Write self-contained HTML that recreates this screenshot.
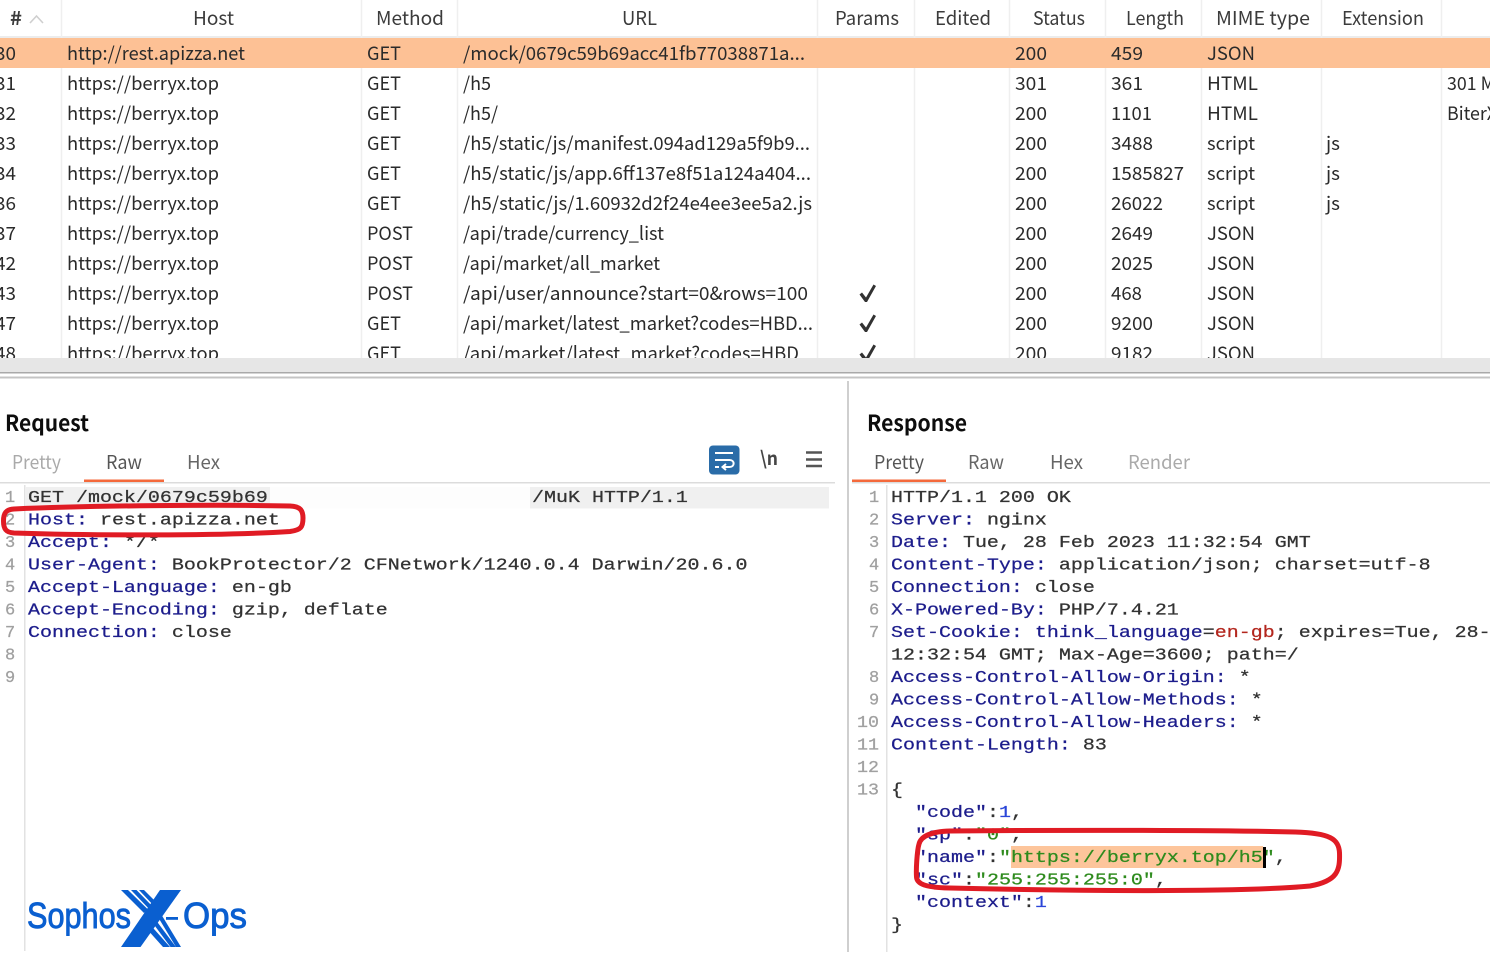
<!DOCTYPE html>
<html><head><meta charset="utf-8"><title>Burp capture</title>
<style>
html,body{margin:0;padding:0;background:#fff;width:1490px;height:968px;overflow:hidden}
svg{display:block}
.s{font-family:"Noto Sans CJK SC","Liberation Sans",sans-serif;font-size:18.5px;fill:#2b2b2b}
.h{font-family:"Noto Sans CJK SC","Liberation Sans",sans-serif;font-size:19px;fill:#3a3a3a}
.t{font-family:"Noto Sans CJK SC","Liberation Sans",sans-serif;font-size:19px;fill:#555}
.b{font-family:"Noto Sans CJK SC","Liberation Sans",sans-serif;font-size:22px;font-weight:700;fill:#111}
.m{font-family:"Liberation Mono",monospace;font-size:17px;fill:#333;stroke:#333;stroke-width:.25px;white-space:pre}
.n{fill:#1f1f8c;stroke:#1f1f8c}.r{fill:#b3261e;stroke:#b3261e}.g{fill:#2e8b1f;stroke:#2e8b1f}.u{fill:#2a45d8;stroke:#2a45d8}.l{fill:#a0a0a0;stroke:#a0a0a0}
.lg{font-family:"Liberation Sans",sans-serif;font-size:36px;fill:#0a5fd0;stroke:#0a5fd0;stroke-width:.9px}
</style></head><body>
<svg width="1490" height="968" viewBox="0 0 1490 968" xmlns="http://www.w3.org/2000/svg" xml:space="preserve">
<defs>
<clipPath id="tbl"><rect x="0" y="0" width="1490" height="358"/></clipPath>
<filter id="soft" x="-2%" y="-2%" width="104%" height="104%"><feGaussianBlur stdDeviation="0.35"/></filter>
<g id="chk"><path d="M859.5 294.5 L862 292.5 L866 297.5 L873.5 284.5 L876 286 L867 302 L865 302 Z" fill="#333"/></g>
</defs>
<rect width="1490" height="968" fill="#fff"/>

<g clip-path="url(#tbl)">
<rect x="0" y="36" width="1490" height="2" fill="#ececec"/>
<g stroke="#efefef" stroke-width="1.5">
<path d="M61.5 0V358M361.5 0V358M457.5 0V358M817.5 0V358M914.5 0V358M1009.5 0V358M1105.5 0V358M1201.5 0V358M1321.5 0V358M1441.5 0V358" fill="none"/>
</g>
<rect x="0" y="38" width="1490" height="30" fill="#fdc195"/>
<g filter="url(#soft)">
<text class="h" x="10" y="25" textLength="12" lengthAdjust="spacingAndGlyphs" font-weight="700">#</text>
<path d="M30 23 L36.500 16 L43 23" fill="none" stroke="#cfcfcf" stroke-width="1.6"/>
<text class="h" x="193" y="25" textLength="41" lengthAdjust="spacingAndGlyphs">Host</text>
<text class="h" x="376" y="25" textLength="68" lengthAdjust="spacingAndGlyphs">Method</text>
<text class="h" x="622" y="25" textLength="35" lengthAdjust="spacingAndGlyphs">URL</text>
<text class="h" x="835" y="25" textLength="64" lengthAdjust="spacingAndGlyphs">Params</text>
<text class="h" x="935" y="25" textLength="56" lengthAdjust="spacingAndGlyphs">Edited</text>
<text class="h" x="1033" y="25" textLength="52" lengthAdjust="spacingAndGlyphs">Status</text>
<text class="h" x="1126" y="25" textLength="58" lengthAdjust="spacingAndGlyphs">Length</text>
<text class="h" x="1216" y="25" textLength="94" lengthAdjust="spacingAndGlyphs">MIME type</text>
<text class="h" x="1342" y="25" textLength="82" lengthAdjust="spacingAndGlyphs">Extension</text>

<text class="s" x="-5" y="60" textLength="21" lengthAdjust="spacingAndGlyphs">30</text>
<text class="s" x="67" y="60" textLength="178" lengthAdjust="spacingAndGlyphs">http://rest.apizza.net</text>
<text class="s" x="367" y="60" textLength="34" lengthAdjust="spacingAndGlyphs">GET</text>
<text class="s" x="463" y="60" textLength="342" lengthAdjust="spacingAndGlyphs">/mock/0679c59b69acc41fb77038871a...</text>
<text class="s" x="1015" y="60" textLength="32" lengthAdjust="spacingAndGlyphs">200</text>
<text class="s" x="1111" y="60" textLength="32" lengthAdjust="spacingAndGlyphs">459</text>
<text class="s" x="1207" y="60" textLength="48" lengthAdjust="spacingAndGlyphs">JSON</text>

<text class="s" x="-5" y="90" textLength="21" lengthAdjust="spacingAndGlyphs">31</text>
<text class="s" x="67" y="90" textLength="152" lengthAdjust="spacingAndGlyphs">https://berryx.top</text>
<text class="s" x="367" y="90" textLength="34" lengthAdjust="spacingAndGlyphs">GET</text>
<text class="s" x="463" y="90" textLength="28" lengthAdjust="spacingAndGlyphs">/h5</text>
<text class="s" x="1015" y="90" textLength="32" lengthAdjust="spacingAndGlyphs">301</text>
<text class="s" x="1111" y="90" textLength="32" lengthAdjust="spacingAndGlyphs">361</text>
<text class="s" x="1207" y="90" textLength="51" lengthAdjust="spacingAndGlyphs">HTML</text>
<text class="s" x="1447" y="90" textLength="48" lengthAdjust="spacingAndGlyphs">301 M</text>

<text class="s" x="-5" y="120" textLength="21" lengthAdjust="spacingAndGlyphs">32</text>
<text class="s" x="67" y="120" textLength="152" lengthAdjust="spacingAndGlyphs">https://berryx.top</text>
<text class="s" x="367" y="120" textLength="34" lengthAdjust="spacingAndGlyphs">GET</text>
<text class="s" x="463" y="120" textLength="35" lengthAdjust="spacingAndGlyphs">/h5/</text>
<text class="s" x="1015" y="120" textLength="32" lengthAdjust="spacingAndGlyphs">200</text>
<text class="s" x="1111" y="120" textLength="41" lengthAdjust="spacingAndGlyphs">1101</text>
<text class="s" x="1207" y="120" textLength="51" lengthAdjust="spacingAndGlyphs">HTML</text>
<text class="s" x="1447" y="120" textLength="50" lengthAdjust="spacingAndGlyphs">BiterX</text>

<text class="s" x="-5" y="150" textLength="21" lengthAdjust="spacingAndGlyphs">33</text>
<text class="s" x="67" y="150" textLength="152" lengthAdjust="spacingAndGlyphs">https://berryx.top</text>
<text class="s" x="367" y="150" textLength="34" lengthAdjust="spacingAndGlyphs">GET</text>
<text class="s" x="463" y="150" textLength="347" lengthAdjust="spacingAndGlyphs">/h5/static/js/manifest.094ad129a5f9b9...</text>
<text class="s" x="1015" y="150" textLength="32" lengthAdjust="spacingAndGlyphs">200</text>
<text class="s" x="1111" y="150" textLength="42" lengthAdjust="spacingAndGlyphs">3488</text>
<text class="s" x="1207" y="150" textLength="48" lengthAdjust="spacingAndGlyphs">script</text>
<text class="s" x="1326" y="150" textLength="14" lengthAdjust="spacingAndGlyphs">js</text>

<text class="s" x="-5" y="180" textLength="21" lengthAdjust="spacingAndGlyphs">34</text>
<text class="s" x="67" y="180" textLength="152" lengthAdjust="spacingAndGlyphs">https://berryx.top</text>
<text class="s" x="367" y="180" textLength="34" lengthAdjust="spacingAndGlyphs">GET</text>
<text class="s" x="463" y="180" textLength="348" lengthAdjust="spacingAndGlyphs">/h5/static/js/app.6ff137e8f51a124a404...</text>
<text class="s" x="1015" y="180" textLength="32" lengthAdjust="spacingAndGlyphs">200</text>
<text class="s" x="1111" y="180" textLength="73" lengthAdjust="spacingAndGlyphs">1585827</text>
<text class="s" x="1207" y="180" textLength="48" lengthAdjust="spacingAndGlyphs">script</text>
<text class="s" x="1326" y="180" textLength="14" lengthAdjust="spacingAndGlyphs">js</text>

<text class="s" x="-5" y="210" textLength="21" lengthAdjust="spacingAndGlyphs">36</text>
<text class="s" x="67" y="210" textLength="152" lengthAdjust="spacingAndGlyphs">https://berryx.top</text>
<text class="s" x="367" y="210" textLength="34" lengthAdjust="spacingAndGlyphs">GET</text>
<text class="s" x="463" y="210" textLength="349" lengthAdjust="spacingAndGlyphs">/h5/static/js/1.60932d2f24e4ee3ee5a2.js</text>
<text class="s" x="1015" y="210" textLength="32" lengthAdjust="spacingAndGlyphs">200</text>
<text class="s" x="1111" y="210" textLength="52" lengthAdjust="spacingAndGlyphs">26022</text>
<text class="s" x="1207" y="210" textLength="48" lengthAdjust="spacingAndGlyphs">script</text>
<text class="s" x="1326" y="210" textLength="14" lengthAdjust="spacingAndGlyphs">js</text>

<text class="s" x="-5" y="240" textLength="21" lengthAdjust="spacingAndGlyphs">37</text>
<text class="s" x="67" y="240" textLength="152" lengthAdjust="spacingAndGlyphs">https://berryx.top</text>
<text class="s" x="367" y="240" textLength="46" lengthAdjust="spacingAndGlyphs">POST</text>
<text class="s" x="463" y="240" textLength="201" lengthAdjust="spacingAndGlyphs">/api/trade/currency_list</text>
<text class="s" x="1015" y="240" textLength="32" lengthAdjust="spacingAndGlyphs">200</text>
<text class="s" x="1111" y="240" textLength="42" lengthAdjust="spacingAndGlyphs">2649</text>
<text class="s" x="1207" y="240" textLength="48" lengthAdjust="spacingAndGlyphs">JSON</text>

<text class="s" x="-5" y="270" textLength="21" lengthAdjust="spacingAndGlyphs">42</text>
<text class="s" x="67" y="270" textLength="152" lengthAdjust="spacingAndGlyphs">https://berryx.top</text>
<text class="s" x="367" y="270" textLength="46" lengthAdjust="spacingAndGlyphs">POST</text>
<text class="s" x="463" y="270" textLength="197" lengthAdjust="spacingAndGlyphs">/api/market/all_market</text>
<text class="s" x="1015" y="270" textLength="32" lengthAdjust="spacingAndGlyphs">200</text>
<text class="s" x="1111" y="270" textLength="42" lengthAdjust="spacingAndGlyphs">2025</text>
<text class="s" x="1207" y="270" textLength="48" lengthAdjust="spacingAndGlyphs">JSON</text>

<text class="s" x="-5" y="300" textLength="21" lengthAdjust="spacingAndGlyphs">43</text>
<text class="s" x="67" y="300" textLength="152" lengthAdjust="spacingAndGlyphs">https://berryx.top</text>
<text class="s" x="367" y="300" textLength="46" lengthAdjust="spacingAndGlyphs">POST</text>
<text class="s" x="463" y="300" textLength="345" lengthAdjust="spacingAndGlyphs">/api/user/announce?start=0&amp;rows=100</text>
<text class="s" x="1015" y="300" textLength="32" lengthAdjust="spacingAndGlyphs">200</text>
<text class="s" x="1111" y="300" textLength="31" lengthAdjust="spacingAndGlyphs">468</text>
<text class="s" x="1207" y="300" textLength="48" lengthAdjust="spacingAndGlyphs">JSON</text>
<use href="#chk"/>

<text class="s" x="-5" y="330" textLength="21" lengthAdjust="spacingAndGlyphs">47</text>
<text class="s" x="67" y="330" textLength="152" lengthAdjust="spacingAndGlyphs">https://berryx.top</text>
<text class="s" x="367" y="330" textLength="34" lengthAdjust="spacingAndGlyphs">GET</text>
<text class="s" x="463" y="330" textLength="350" lengthAdjust="spacingAndGlyphs">/api/market/latest_market?codes=HBD...</text>
<text class="s" x="1015" y="330" textLength="32" lengthAdjust="spacingAndGlyphs">200</text>
<text class="s" x="1111" y="330" textLength="42" lengthAdjust="spacingAndGlyphs">9200</text>
<text class="s" x="1207" y="330" textLength="48" lengthAdjust="spacingAndGlyphs">JSON</text>
<use href="#chk" y="30"/>

<text class="s" x="-5" y="360" textLength="21" lengthAdjust="spacingAndGlyphs">48</text>
<text class="s" x="67" y="360" textLength="152" lengthAdjust="spacingAndGlyphs">https://berryx.top</text>
<text class="s" x="367" y="360" textLength="34" lengthAdjust="spacingAndGlyphs">GET</text>
<text class="s" x="463" y="360" textLength="336" lengthAdjust="spacingAndGlyphs">/api/market/latest_market?codes=HBD</text>
<text class="s" x="1015" y="360" textLength="32" lengthAdjust="spacingAndGlyphs">200</text>
<text class="s" x="1111" y="360" textLength="42" lengthAdjust="spacingAndGlyphs">9182</text>
<text class="s" x="1207" y="360" textLength="48" lengthAdjust="spacingAndGlyphs">JSON</text>
<use href="#chk" y="60"/>
</g>
</g>

<rect x="0" y="358" width="1490" height="14" fill="#e6e6e6"/>
<rect x="0" y="372" width="1490" height="1.500" fill="#a9a9a9"/>
<rect x="0" y="376.500" width="1490" height="2" fill="#c4c4c4"/>
<rect x="847" y="381" width="2" height="571" fill="#cfcfcf"/>

<g filter="url(#soft)">
<text class="b" x="5" y="431" textLength="84" lengthAdjust="spacingAndGlyphs">Request</text>
<text class="t" x="12" y="469" textLength="49" lengthAdjust="spacingAndGlyphs" style="fill:#aaa">Pretty</text>
<text class="t" x="106" y="469" textLength="36" lengthAdjust="spacingAndGlyphs">Raw</text>
<text class="t" x="187" y="469" textLength="33" lengthAdjust="spacingAndGlyphs" style="fill:#666">Hex</text>
<rect x="84" y="479.500" width="80" height="2.500" fill="#f4693a"/>
<rect x="0" y="482" width="835" height="1.500" fill="#dcdcdc"/>

<rect x="709" y="445.500" width="30.500" height="29" rx="4" fill="#2c6ca8"/>
<path d="M715 453H733M715 460H729.500C735 460 735 467 729.500 467H723M726 464L722.500 467L726 470M715 467H719" fill="none" stroke="#fff" stroke-width="2"/>
<text class="t" x="760" y="465" textLength="18" lengthAdjust="spacingAndGlyphs" style="fill:#444;font-weight:700">\n</text>
<path d="M806 452.500H822M806 459.500H822M806 466H822" stroke="#555" stroke-width="2.500" fill="none"/>

<rect x="26" y="487" width="803" height="21.500" fill="#f0f0f0"/>
<rect x="270" y="487" width="260" height="21.500" fill="#fdfdfd"/>
<rect x="24" y="485" width="1.500" height="466" fill="#e2e2e2"/>

<text class="m l" x="5" y="502">1</text>
<text class="m l" x="5" y="524.500">2</text>
<text class="m l" x="5" y="547">3</text>
<text class="m l" x="5" y="569.500">4</text>
<text class="m l" x="5" y="592">5</text>
<text class="m l" x="5" y="614.500">6</text>
<text class="m l" x="5" y="637">7</text>
<text class="m l" x="5" y="659.500">8</text>
<text class="m l" x="5" y="682">9</text>

<text class="m" transform="translate(28 502) scale(1.176 1)">GET /mock/0679c59b69</text>
<text class="m" transform="translate(532 502) scale(1.176 1)">/MuK HTTP/1.1</text>
<text class="m" transform="translate(28 524.500) scale(1.176 1)"><tspan class="n">Host:</tspan> rest.apizza.net</text>
<text class="m" transform="translate(28 547) scale(1.176 1)"><tspan class="n">Accept:</tspan> */*</text>
<text class="m" transform="translate(28 569.500) scale(1.176 1)"><tspan class="n">User-Agent:</tspan> BookProtector/2 CFNetwork/1240.0.4 Darwin/20.6.0</text>
<text class="m" transform="translate(28 592) scale(1.176 1)"><tspan class="n">Accept-Language:</tspan> en-gb</text>
<text class="m" transform="translate(28 614.500) scale(1.176 1)"><tspan class="n">Accept-Encoding:</tspan> gzip, deflate</text>
<text class="m" transform="translate(28 637) scale(1.176 1)"><tspan class="n">Connection:</tspan> close</text>

<text class="b" x="867" y="431" textLength="100" lengthAdjust="spacingAndGlyphs">Response</text>
<text class="t" x="874" y="469" textLength="50" lengthAdjust="spacingAndGlyphs">Pretty</text>
<text class="t" x="968" y="469" textLength="36" lengthAdjust="spacingAndGlyphs" style="fill:#666">Raw</text>
<text class="t" x="1050" y="469" textLength="33" lengthAdjust="spacingAndGlyphs" style="fill:#666">Hex</text>
<text class="t" x="1128" y="469" textLength="62" lengthAdjust="spacingAndGlyphs" style="fill:#aaa">Render</text>
<rect x="852" y="479.500" width="94" height="2.500" fill="#f4693a"/>
<rect x="852" y="482" width="638" height="1.500" fill="#dcdcdc"/>
<rect x="886" y="485" width="1.500" height="467" fill="#e2e2e2"/>

<text class="m l" x="869" y="502">1</text>
<text class="m l" x="869" y="524.500">2</text>
<text class="m l" x="869" y="547">3</text>
<text class="m l" x="869" y="569.500">4</text>
<text class="m l" x="869" y="592">5</text>
<text class="m l" x="869" y="614.500">6</text>
<text class="m l" x="869" y="637">7</text>
<text class="m l" x="869" y="682">8</text>
<text class="m l" x="869" y="704.500">9</text>
<text class="m l" x="857" y="727" textLength="22" lengthAdjust="spacingAndGlyphs">10</text>
<text class="m l" x="857" y="749.500" textLength="22" lengthAdjust="spacingAndGlyphs">11</text>
<text class="m l" x="857" y="772" textLength="22" lengthAdjust="spacingAndGlyphs">12</text>
<text class="m l" x="857" y="794.500" textLength="22" lengthAdjust="spacingAndGlyphs">13</text>

<text class="m" transform="translate(891 502) scale(1.176 1)">HTTP/1.1 200 OK</text>
<text class="m" transform="translate(891 524.500) scale(1.176 1)"><tspan class="n">Server:</tspan> nginx</text>
<text class="m" transform="translate(891 547) scale(1.176 1)"><tspan class="n">Date:</tspan> Tue, 28 Feb 2023 11:32:54 GMT</text>
<text class="m" transform="translate(891 569.500) scale(1.176 1)"><tspan class="n">Content-Type:</tspan> application/json; charset=utf-8</text>
<text class="m" transform="translate(891 592) scale(1.176 1)"><tspan class="n">Connection:</tspan> close</text>
<text class="m" transform="translate(891 614.500) scale(1.176 1)"><tspan class="n">X-Powered-By:</tspan> PHP/7.4.21</text>
<text class="m" transform="translate(891 637) scale(1.176 1)"><tspan class="n">Set-Cookie: think_language</tspan>=<tspan class="r">en-gb</tspan>; expires=Tue, 28-</text>
<text class="m" transform="translate(891 659.500) scale(1.176 1)">12:32:54 GMT; Max-Age=3600; path=/</text>
<text class="m" transform="translate(891 682) scale(1.176 1)"><tspan class="n">Access-Control-Allow-Origin:</tspan> *</text>
<text class="m" transform="translate(891 704.500) scale(1.176 1)"><tspan class="n">Access-Control-Allow-Methods:</tspan> *</text>
<text class="m" transform="translate(891 727) scale(1.176 1)"><tspan class="n">Access-Control-Allow-Headers:</tspan> *</text>
<text class="m" transform="translate(891 749.500) scale(1.176 1)"><tspan class="n">Content-Length:</tspan> 83</text>
<text class="m" transform="translate(891 794.500) scale(1.176 1)">{</text>
<text class="m" transform="translate(915 817) scale(1.176 1)"><tspan class="n">"code"</tspan>:<tspan class="u">1</tspan>,</text>
<text class="m" transform="translate(915 839.500) scale(1.176 1)"><tspan class="n">"sp"</tspan>:<tspan class="g">"0"</tspan>,</text>
<rect x="1011" y="846" width="252" height="22" fill="#fdc59b"/>
<text class="m" transform="translate(915 862) scale(1.176 1)"><tspan class="n">"name"</tspan>:<tspan class="g">"https://berryx.top/h5"</tspan>,</text>
<rect x="1263" y="847" width="3" height="21" fill="#000"/>
<text class="m" transform="translate(915 884.500) scale(1.176 1)"><tspan class="n">"sc"</tspan>:<tspan class="g">"255:255:255:0"</tspan>,</text>
<text class="m" transform="translate(915 907) scale(1.176 1)"><tspan class="n">"context"</tspan>:<tspan class="u">1</tspan></text>
<text class="m" transform="translate(891 929.500) scale(1.176 1)">}</text>
</g>

<path d="M14 509C90 505.500 220 504.500 290 506C300 506.500 303 510 303 518C303 527 301 530 290 531.500C220 536 90 535.500 14 533C6 532.500 3.500 529 3.500 521C3.500 513 6 509.500 14 509Z" fill="none" stroke="#e01b24" stroke-width="5"/>
<path d="M950 831C1060 830 1210 830 1295 832C1330 833 1339 839 1339.500 853C1340 870 1338 881 1310 886C1240 892.500 1070 891 950 888C925 887.500 917 884 916.500 877C916 869 917 851 919 844C921 836 932 831.500 950 831Z" fill="none" stroke="#e01b24" stroke-width="5"/>

<text class="lg" x="27" y="928" textLength="104" lengthAdjust="spacingAndGlyphs">Sophos</text>
<g fill="#0a5fd0">
<path d="M121 890H128L148 909.500L144 913Z"/>
<path d="M131 890H136.500L154 908L151 911Z"/>
<path d="M139 890H144L158 904L155 907Z"/>
<path d="M146 928L150 924.500L170 947H163Z"/>
<path d="M152 922L155 919L176 947H170.500Z"/>
<path d="M158 917L161 914L181 947H176Z"/>
<path d="M160 890H181L140.500 947H121Z"/>
<rect x="166" y="917" width="12" height="2.800"/>
</g>
<text class="lg" x="183" y="928" textLength="64" lengthAdjust="spacingAndGlyphs">Ops</text>
</svg>
</body></html>
